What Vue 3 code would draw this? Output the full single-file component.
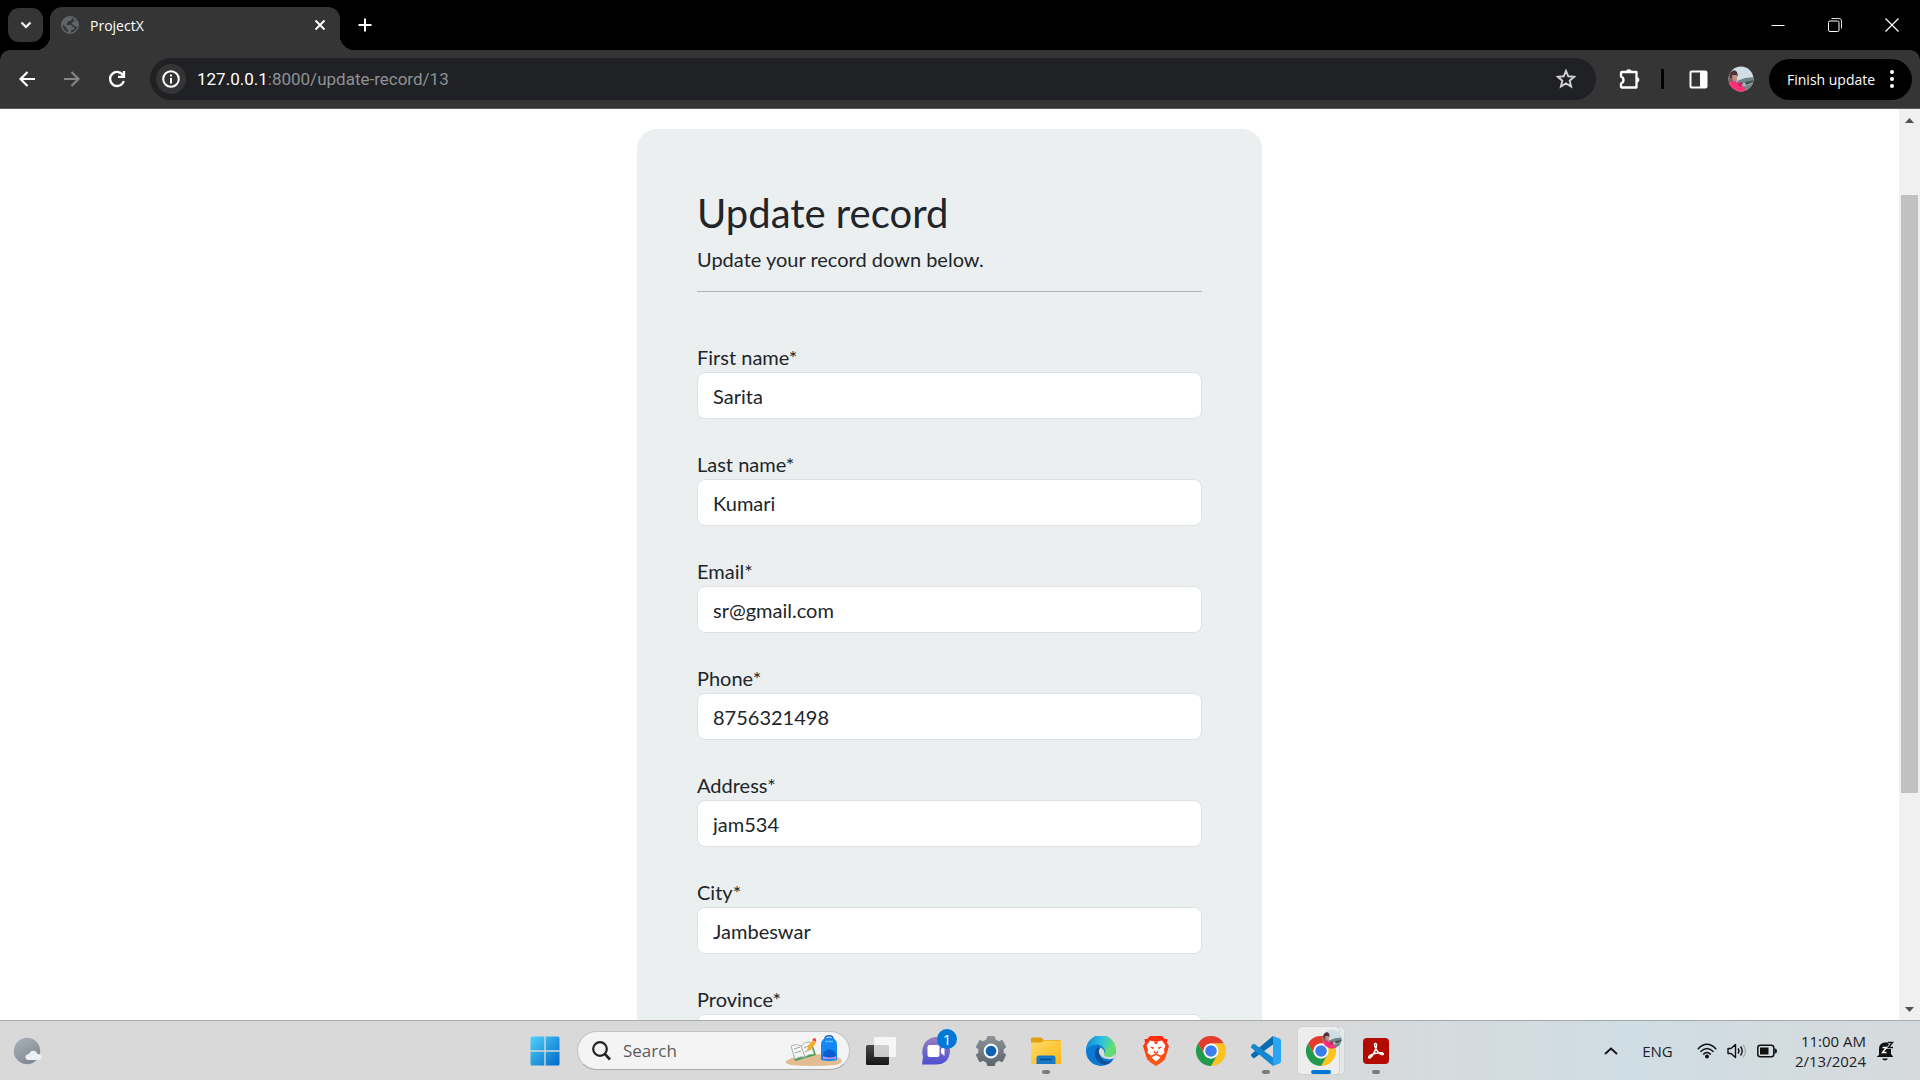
<script setup>
import { ref } from 'vue'

const address = ref('127.0.0.1:8000/update-record/13')
const search = ref('')
const fields = ref([
  { id: 'first_name', label: 'First name*', value: 'Sarita', type: 'text' },
  { id: 'last_name', label: 'Last name*', value: 'Kumari', type: 'text' },
  { id: 'email', label: 'Email*', value: 'sr@gmail.com', type: 'email' },
  { id: 'phone', label: 'Phone*', value: '8756321498', type: 'text' },
  { id: 'address', label: 'Address*', value: 'jam534', type: 'text' },
  { id: 'city', label: 'City*', value: 'Jambeswar', type: 'text' },
  { id: 'province', label: 'Province*', value: '', type: 'text' },
])
</script>

<template>
  <div class="screen">
    <svg class="defs" aria-hidden="true">
      <defs>
        <linearGradient id="win" x1="0" y1="0" x2="1" y2="1"><stop offset="0" stop-color="#4fd2fb" /><stop offset="1" stop-color="#0067c8" /></linearGradient>
        <linearGradient id="chat" x1="0" y1="0" x2="0" y2="1"><stop offset="0" stop-color="#9a7fc0" /><stop offset="1" stop-color="#4c50cf" /></linearGradient>
        <linearGradient id="gear" x1="0" y1="0" x2="0" y2="1"><stop offset="0" stop-color="#8b9299" /><stop offset="1" stop-color="#5d666f" /></linearGradient>
        <linearGradient id="folder" x1="0" y1="0" x2="1" y2="1"><stop offset="0" stop-color="#ffdb6b" /><stop offset="1" stop-color="#fbb813" /></linearGradient>
        <linearGradient id="edgeTop" x1="0" y1="0.3" x2="1" y2="0.5"><stop offset="0" stop-color="#1289d8" /><stop offset="0.5" stop-color="#2fc1de" /><stop offset="1" stop-color="#6be85a" /></linearGradient>
        <linearGradient id="moon" x1="0.2" y1="0" x2="0.8" y2="1"><stop offset="0" stop-color="#a7aeb6" /><stop offset="1" stop-color="#7d8791" /></linearGradient>
        <linearGradient id="brave" x1="0" y1="0" x2="0" y2="1"><stop offset="0" stop-color="#ff2a10" /><stop offset="1" stop-color="#ff5a12" /></linearGradient>
        <linearGradient id="dark" x1="0" y1="0" x2="0" y2="1"><stop offset="0" stop-color="#484848" /><stop offset="1" stop-color="#161616" /></linearGradient>
        <clipPath id="face"><circle cx="13" cy="13" r="12.5" /></clipPath>
        <symbol id="chrome" viewBox="-15 -15 30 30">
          <path fill="#e33b2e" d="M13-7.5A15 15 0 0 0-13-7.5L-6.5 3.75A7.5 7.5 0 0 1 0-7.5Z" />
          <path fill="#fcc31e" d="M0 15A15 15 0 0 0 13-7.5L0-7.5A7.5 7.5 0 0 1 6.5 3.75Z" />
          <path fill="#219a4c" d="M-13-7.5A15 15 0 0 0 0 15L6.5 3.75A7.5 7.5 0 0 1-6.5 3.75Z" />
          <circle r="7.4" fill="#fff" /><circle r="5.8" fill="#3b7ded" />
        </symbol>
        <symbol id="avatar" viewBox="0 0 26 26">
          <g clip-path="url(#face)">
            <path fill="#cfdde5" d="M0 0h26v26H0z" />
            <path fill="#6f8587" d="M9 15l8-3 9-1v15H9z" />
            <path fill="#a9b7a8" d="M12 18l14-4v3l-12 4z" />
            <path fill="#3c5254" d="M17 16l9-2v2l-8 3z" />
            <path fill="#84635c" d="M0 6h8v11H0z" />
            <path fill="#4a3238" d="M2 7q4-5 7-1l1 4-8 2z" />
            <path fill="#c08d80" d="M4 9h5v6H5z" />
            <path fill="#ff2f79" d="M1 16l5-1 4 2 4 2 5 7H4z" />
            <path fill="#b9235c" d="M8 15l3 3 2-2 2 1-3 4z" />
          </g>
        </symbol>
      </defs>
    </svg>

    <header class="browser">
      <div class="tabs">
        <button class="tab-search" aria-label="Search tabs">
          <svg width="12" height="8" viewBox="0 0 12 8"><path d="M1.5 1.5L6 6L10.5 1.5" fill="none" stroke="#fff" stroke-width="2.2" /></svg>
        </button>
        <div class="tab">
          <svg width="18" height="18" viewBox="0 0 18 18">
            <circle cx="9" cy="9" r="8.200" fill="#353535" stroke="#62666b" stroke-width="1.6" />
            <path fill="#62666b" d="M1 8C1 4 4 1 9 1L11 2Q11 4 9.500 5H7V7H5.500V9H9.500Q11.500 9 11.500 11H12.500Q13.500 12 13 13.500L10.500 14L9.500 17Q8 17 7 16.500V13.500Q5 13 5 11L1 8ZM12 2.500L16 6L17 9L16 10.500H14Q12.500 10 12.500 8.500H11Q10.500 7.500 11 6.500L13 6Z" />
          </svg>
          <span class="tab-title">ProjectX</span>
          <button class="plain" aria-label="Close tab">
            <svg width="12" height="12" viewBox="0 0 12 12"><path d="M1.5 1.5L10.5 10.5M10.5 1.5L1.5 10.5" stroke="#fff" stroke-width="1.9" /></svg>
          </button>
        </div>
        <button class="plain new-tab" aria-label="New tab">
          <svg width="14" height="14" viewBox="0 0 14 14"><path d="M7 .5V13.5M.5 7H13.5" stroke="#fff" stroke-width="2" /></svg>
        </button>
        <div class="window-buttons">
          <button class="plain" aria-label="Minimize"><svg width="14" height="14" viewBox="0 0 14 14"><path d="M.5 7.5H13.5" stroke="#fff" /></svg></button>
          <button class="plain" aria-label="Restore"><svg width="14" height="14" viewBox="0 0 14 14"><path d="M3.5 .5H11Q13.5 .5 13.5 3V10.5" fill="none" stroke="#ddd" /><rect x=".5" y="3" width="10.5" height="10.5" rx="1.5" fill="none" stroke="#fff" /></svg></button>
          <button class="plain" aria-label="Close"><svg width="14" height="14" viewBox="0 0 14 14"><path d="M.5 .5L13.5 13.5M13.5 .5L.5 13.5" stroke="#fff" stroke-width="1.2" /></svg></button>
        </div>
      </div>

      <div class="toolbar">
        <nav class="nav">
          <button class="plain" aria-label="Back"><svg width="16" height="16" viewBox="0 0 16 16"><path d="M16 8H2M8.5 1L1.5 8L8.5 15" fill="none" stroke="#fff" stroke-width="2.2" /></svg></button>
          <button class="plain" aria-label="Forward"><svg width="16" height="16" viewBox="0 0 16 16"><path d="M0 8H14M7.5 1L14.5 8L7.5 15" fill="none" stroke="#858585" stroke-width="2.2" /></svg></button>
          <button class="plain" aria-label="Reload"><svg width="18" height="18" viewBox="0 0 18 18"><path d="M15.2 5.5A7 7 0 1 0 15.8 11M16 1V6.8H10" fill="none" stroke="#fff" stroke-width="2.3" /></svg></button>
        </nav>
        <div class="omnibox">
          <button class="info" aria-label="Site information">
            <svg width="18" height="18" viewBox="0 0 18 18"><circle cx="9" cy="9" r="7.8" fill="none" stroke="#fff" stroke-width="2" /><path d="M9 8V13.5M9 4.5V6.5" stroke="#fff" stroke-width="2" /></svg>
          </button>
          <label class="address">
            <span class="address-text"><b>127.0.0.1</b>:8000/update-record/13</span>
            <input v-model="address" class="address-input" aria-label="Address bar" />
          </label>
          <button class="plain" aria-label="Bookmark this page">
            <svg width="20" height="20" viewBox="0 0 20 20"><path d="M10 1.8L12.3 7.3L18.2 7.8L13.7 11.7L15.1 17.5L10 14.4L4.9 17.5L6.3 11.7L1.8 7.8L7.7 7.3Z" fill="none" stroke="#d0d0d0" stroke-width="1.9" /></svg>
          </button>
        </div>
        <div class="tools">
          <button class="plain" aria-label="Extensions">
            <svg width="22" height="22" viewBox="0 0 22 22"><path d="M3 4H17.5V19.5H3Q2 19.5 2 18.5V15.5Q4.500 14.500 4.500 12Q4.500 9.500 2 8.500V5Q2 4 3 4Z" fill="none" stroke="#fff" stroke-width="2.3" stroke-linejoin="round" /><path d="M7 4a2.800 2.800 0 0 1 5.600 0zM17.5 9a2.800 2.800 0 0 1 0 5.600z" fill="#fff" /></svg>
          </button>
          <span class="divider"></span>
          <button class="plain" aria-label="Side panel">
            <svg width="19" height="19" viewBox="0 0 19 19"><rect x="1.5" y="1.5" width="16" height="16" rx="1" fill="none" stroke="#fff" stroke-width="2" /><path d="M11 1h7v17h-7z" fill="#fff" /></svg>
          </button>
          <button class="plain" aria-label="Profile"><svg width="26" height="26"><use href="#avatar" /></svg></button>
        </div>
        <button class="finish">
          Finish update
          <svg width="4" height="18" viewBox="0 0 4 18"><g fill="#fff"><circle cx="2" cy="2" r="2" /><circle cx="2" cy="9" r="2" /><circle cx="2" cy="16" r="2" /></g></svg>
        </button>
      </div>
    </header>

    <div class="viewport">
      <main class="page">
        <form class="card" @submit.prevent>
          <h1>Update record</h1>
          <p>Update your record down below.</p>
          <hr />
          <div v-for="f in fields" :key="f.id" class="field">
            <label :for="f.id">{{ f.label }}</label>
            <input :id="f.id" v-model="f.value" :type="f.type" />
          </div>
        </form>
      </main>
      <div class="scrollbar" aria-hidden="true">
        <svg width="21" height="21" viewBox="0 0 21 21"><path d="M6 14L10.5 9L15 14Z" fill="#505050" /></svg>
        <div class="track-before"></div>
        <div class="thumb"></div>
        <div class="track-after"></div>
        <svg width="21" height="21" viewBox="0 0 21 21"><path d="M6 8L10.5 13L15 8Z" fill="#505050" /></svg>
      </div>
    </div>

    <footer class="taskbar">
      <div class="side">
        <button class="plain" aria-label="Weather">
          <svg width="30" height="28" viewBox="0 0 30 28"><circle cx="14" cy="14" r="13.2" fill="url(#moon)" /><path d="M15 23Q12 22 12.5 19.5Q13 17 16 17Q18 12.5 22 14Q24 15 24.5 17Q29 17 28.5 20.5Q28 23 25 23Z" fill="#edf1f5" /></svg>
        </button>
      </div>
      <div class="apps">
        <button class="app" aria-label="Start">
          <svg width="30" height="30" viewBox="0 0 30 30"><path fill="url(#win)" d="M2 .5H14.3V14.3H.5V2Q.5 .5 2 .5ZM15.7 .5H28Q29.5 .5 29.5 2V14.3H15.7ZM.5 15.7H14.3V29.5H2Q.5 29.5 .5 28ZM15.7 15.7H29.5V28Q29.5 29.5 28 29.5H15.7Z" /></svg>
        </button>
        <label class="search">
          <svg width="19" height="20" viewBox="0 0 19 20"><circle cx="8" cy="8" r="6.8" fill="none" stroke="#222" stroke-width="2.2" /><path d="M12.8 12.8L18 18.5" stroke="#222" stroke-width="2.6" /></svg>
          <input v-model="search" type="text" placeholder="Search" aria-label="Search" />
          <svg width="58" height="32" viewBox="0 0 58 32">
            <path d="M1 26Q10 20 26 19.500Q48 18 56 24Q59 27 51 30Q26 32 6 30Q-1 28 1 26Z" fill="#e3bd92" />
            <path d="M7 14L10 26L31 20L28 11Z" fill="#3f9c55" />
            <path d="M6 11Q12 8 16 11Q20 6 25 7L29 19Q23 19 20 22Q15 21 10 24Z" fill="#f6f6f0" stroke="#a9b7b5" />
            <path d="M16 11L20 22M9 14l6-2M10 18l6-2M19 13l6-3M20 17l6-3" stroke="#9ba7ad" fill="none" />
            <path d="M22 16L23 11L28 5L31 8L26 14Z" fill="#f8ab25" /><path d="M27 5L29 3Q32 3 31 7Z" fill="#ed4858" />
            <path d="M40 4Q40 .8 44 .8Q48 .8 48 4" fill="none" stroke="#1469cc" stroke-width="1.6" />
            <path d="M36 25V10Q36 2.5 44 2.5Q52 2.5 52 10V25Q44 27 36 25Z" fill="#1687f2" />
            <path d="M38 24V20Q39 14.500 44 14.500Q50 14.500 51 20V24Z" fill="#0a5bcf" /><path d="M38 21Q45 24 51 21V24H38Z" fill="#b58cf2" />
            <path d="M40 6.5H48" stroke="#51c3ff" stroke-width="1.5" />
          </svg>
        </label>
        <button class="app" aria-label="Task view">
          <svg width="30" height="30" viewBox="0 0 30 30"><rect x="0" y="9" width="23" height="20" rx="1.5" fill="url(#dark)" /><rect x="8" y="1" width="22" height="20" rx="1" fill="#fff" fill-opacity=".75" /></svg>
        </button>
        <button class="app" aria-label="Chat">
          <svg width="30" height="30" viewBox="0 0 30 30"><path d="M1 28.5L2 21Q0 14 3.5 7.5Q8 1 15 1Q28 2 29 15Q28 28.5 15 28.5Z" fill="url(#chat)" /><rect x="6.5" y="9" width="12" height="12" rx="2" fill="#fff" /><path d="M20 13L23.5 10V20L20 17Z" fill="#fff" /></svg>
          <span class="badge">1</span>
        </button>
        <button class="app" aria-label="Settings">
          <svg width="30" height="30" viewBox="-15 -15 30 30">
            <path fill="url(#gear)" d="M-4-10.5L-3-14H3L4-10.5Q6-10 7.5-8.5L11-10L14-4L11.5-2Q12 0 11.5 2L14 4L11 10L7.5 8.5Q6 10 4 10.5L3 14H-3L-4 10.5Q-6 10-7.5 8.5L-11 10L-14 4L-11.5 2Q-12 0-11.5-2L-14-4L-11-10L-7.5-8.5Q-6-10-4-10.5Z" stroke="url(#gear)" stroke-width="2" stroke-linejoin="round" />
            <circle r="7.4" fill="#f4f5f6" /><circle r="5.3" fill="#0e61b3" />
          </svg>
        </button>
        <button class="app" aria-label="File Explorer">
          <svg width="30" height="30" viewBox="0 0 30 30"><path d="M0 8V3Q0 1.5 1.5 1.5H10L13 4H28.5Q30 4 30 6V9Z" fill="#e0a010" /><path d="M0 7.5Q0 6.5 1 6.5H10L13 4.5H29Q30 4.5 30 5.5V28H0Z" fill="url(#folder)" /><path d="M5.5 28V22Q5.5 19.5 8 19.5H22Q24.5 19.5 24.5 22V28Z" fill="#1779c8" /><path d="M10 23.5H20" stroke="#0c4c8c" stroke-width="1.6" stroke-linecap="round" /></svg>
          <span class="mark"></span>
        </button>
        <button class="app" aria-label="Edge">
          <svg width="30" height="30" viewBox="0 0 30 30"><circle cx="15" cy="15" r="15" fill="#0d78d2" /><path d="M0 14A15 15 0 0 1 30 14Q30 20 23 20.5Q18 20.5 18.5 17.5Q20 15 18 12.5Q14 7 8 9Q3 10 0 14Z" fill="url(#edgeTop)" /><path d="M10 13Q7 22 14 27Q20 31 26.5 25Q18 27 14.5 21Q13 17 16 13Q12 10 10 13Z" fill="#10509a" /><path d="M14.5 11.5Q19 13.5 18.3 17.5Q18 20.5 24 20.5Q28 20 30 16.5Q29.5 21 28 22.500Q20 24.500 15 20.500Q11 15 14.5 11.5Z" fill="#d8dadb" /><path d="M18.3 17.5Q17 21 23 21Q28.5 21 30 14L28 12L20 12Q20 16 18.3 17.5Z" fill="#63dc78" /></svg>
        </button>
        <button class="app" aria-label="Brave">
          <svg width="26" height="30" viewBox="0 0 26 30">
            <path d="M7 0H19L22 3L24.5 3L24 7L26 10L22 23Q20 26 13 30Q6 26 4 23L0 10L2 7L1.5 3L4 3Z" fill="url(#brave)" />
            <path d="M7 4.500L11 5.500H15L19 4.500L22.500 9.500L21 13.500L21.500 17L18 19.500L13 17.500L8 19.500L4.500 17L5 13.500L3.500 9.500Z" fill="#fff" />
            <path d="M13 19L17.500 21.500L13 25.500L8.500 21.500Z" fill="#fff" />
            <path d="M6.500 10.500L11 11.200L10.200 13.500ZM19.500 10.500L15 11.200L15.800 13.500ZM11 5.500L12 8H14L15 5.500ZM11.500 14L10.500 16.500L13 18L15.500 16.500L14.500 14L14 16L13 16.500L12 16Z" fill="#ff4717" />
          </svg>
        </button>
        <button class="app" aria-label="Chrome"><svg width="30" height="30"><use href="#chrome" /></svg></button>
        <button class="app" aria-label="Visual Studio Code">
          <svg width="30" height="30" viewBox="0 0 30 30"><path d="M22 0V8.500L3.500 22Q2.500 22.500 1.500 21.500L.3 20Q-.5 19 .5 18Z" fill="#0a6cb0" /><path d="M22 30V21.500L3.500 8Q2.500 7.500 1.500 8.500L.3 10Q-.5 11 .5 12Z" fill="#1389d1" /><path d="M22 0L28 2.300Q30 3 30 5V25Q30 27 28 27.700L22 30Z" fill="#2ba5f2" /></svg>
          <span class="mark"></span>
        </button>
        <button class="app active" aria-label="Chrome, ProjectX">
          <svg width="30" height="30"><use href="#chrome" /></svg>
          <svg class="mini" width="20" height="20"><use href="#avatar" /></svg>
          <span class="mark wide"></span>
        </button>
        <button class="app" aria-label="Acrobat">
          <svg width="26" height="26" viewBox="0 0 26 26"><rect width="26" height="26" rx="4" fill="#b30b00" /><path d="M12 5.500Q14.200 5 13.300 9Q12 14 9 18Q7 20.500 5.800 19.800Q5 18.500 8 17Q13 14.500 18.500 14.800Q21 15.300 20.200 16.500Q18.500 17.500 15.500 14.500Q12.500 11 11.500 7.500Q11.200 5.800 12 5.500Z" fill="none" stroke="#fff" stroke-width="1.4" /></svg>
          <span class="mark"></span>
        </button>
      </div>
      <div class="side tray">
        <button class="plain" aria-label="Show hidden icons"><svg width="14" height="8" viewBox="0 0 14 8"><path d="M1 7L7 1.5L13 7" fill="none" stroke="#111" stroke-width="1.8" /></svg></button>
        <button class="plain lang">ENG</button>
        <button class="plain status" aria-label="Network, volume and battery">
          <svg width="20" height="16" viewBox="0 0 20 16"><g fill="none" stroke="#111" stroke-width="1.5"><path d="M.8 6.2Q10-3.500 19.2 6.2M3.5 8.8Q10 2 16.5 8.8M6.2 11.5Q10 7.500 13.8 11.5" /></g><circle cx="10" cy="13.5" r="2" fill="#111" /></svg>
          <svg width="20" height="16" viewBox="0 0 20 16"><path d="M1 5.5H4L8.5 1.5V14.5L4 10.5H1Z M11 5.5Q13 8 11 10.5M13.5 3.5Q17 8 13.5 12.5" fill="none" stroke="#111" stroke-width="1.4" stroke-linejoin="round" /><path d="M16 1.5Q21 8 16 14.5" fill="none" stroke="#a8afb2" stroke-width="1.4" /></svg>
          <svg width="20" height="14" viewBox="0 0 20 14"><rect x=".8" y="1.3" width="16" height="11.4" rx="2.5" fill="none" stroke="#111" stroke-width="1.5" /><rect x="3" y="3.5" width="8.5" height="7" fill="#111" /><path d="M17.5 4.5H18.5Q20 5 20 7Q20 9 18.5 9.5H17.5Z" fill="#111" /></svg>
        </button>
        <button class="plain clock"><span>11:00 AM</span><span>2/13/2024</span></button>
        <button class="plain" aria-label="Notifications">
          <svg width="17" height="20" viewBox="0 0 17 20"><path d="M2 14V8Q2 2 8 1.5H11L14 8V13L16 15.5V16H0V15.5ZM5 17.5H11Q10 19.5 8 19.5Q6 19.5 5 17.5Z" fill="#111" /><path d="M5.5 6.5H9.5L5.5 11.5H9.5" fill="none" stroke="#fff" stroke-width="1.4" /><path d="M11 1.5H15.5L11.5 6.5H16" fill="none" stroke="#d4dbde" stroke-width="3" /><path d="M11 1.5H15.5L11.5 6.5H16" fill="none" stroke="#111" stroke-width="1.4" /></svg>
        </button>
      </div>
    </footer>
  </div>
</template>

<style>
body {
  margin: 0;
  overflow: hidden;
}
</style>

<style scoped>
* {
  box-sizing: border-box;
}
svg {
  display: block;
  flex: none;
}
button,
input {
  font: inherit;
  color: inherit;
}
.defs {
  position: absolute;
  width: 0;
  height: 0;
}
.screen {
  display: flex;
  flex-direction: column;
  height: 100vh;
  background: #fff;
  font-family: "Open Sans", "Noto Sans", sans-serif;
}
.browser {
  flex: none;
  background: #000;
  color: #fff;
}
.plain {
  display: flex;
  align-items: center;
  justify-content: center;
  padding: 0;
  border: 0;
  background: none;
}

/* tab strip */
.tabs {
  display: flex;
  align-items: center;
  height: 50px;
  padding-left: 8px;
}
.tab-search {
  display: flex;
  align-items: center;
  justify-content: center;
  width: 35px;
  height: 34px;
  padding: 0;
  border: 0;
  border-radius: 11px;
  background: #353535;
}
.tab {
  position: relative;
  display: flex;
  align-items: center;
  gap: 11px;
  align-self: flex-end;
  width: 290px;
  height: 43px;
  margin-left: 7px;
  padding: 0 14px 7px 11px;
  border-radius: 12px 12px 0 0;
  background: #353535;
  font-size: 14px;
}
.tab::before,
.tab::after {
  content: "";
  position: absolute;
  bottom: 0;
  width: 14px;
  height: 14px;
}
.tab::before {
  left: -14px;
  background: radial-gradient(circle at 0 0, transparent 14px, #353535 14px);
}
.tab::after {
  right: -14px;
  background: radial-gradient(circle at 100% 0, transparent 14px, #353535 14px);
}
.tab-title {
  flex: 1;
}
.new-tab {
  width: 50px;
  height: 40px;
}
.window-buttons {
  display: flex;
  height: 50px;
  margin-left: auto;
}
.window-buttons .plain {
  width: 57px;
}

/* toolbar */
.toolbar {
  display: flex;
  align-items: center;
  height: 59px;
  padding-right: 8px;
  border-bottom: 1px solid #5a5a5a;
  border-radius: 10px 10px 0 0;
  background: #353535;
}
.nav {
  display: flex;
  width: 150px;
  padding-left: 4px;
}
.nav .plain {
  width: 45px;
  height: 40px;
}
.omnibox {
  display: flex;
  flex: 1;
  align-items: center;
  gap: 11px;
  height: 42px;
  padding: 0 20px 0 6px;
  border-radius: 21px;
  background: #202124;
}
.info {
  display: flex;
  align-items: center;
  justify-content: center;
  width: 30px;
  height: 30px;
  padding: 0;
  border: 0;
  border-radius: 15px;
  background: #353535;
}
.address {
  position: relative;
  display: flex;
  flex: 1;
  align-items: center;
  font-family: Roboto, "Open Sans", sans-serif;
  font-size: 17px;
  line-height: 24px;
}
.address-text {
  color: #8f9194;
}
.address-text b {
  color: #fff;
  font-weight: 400;
}
.address-input {
  position: absolute;
  inset: 0;
  width: 100%;
  padding: 0;
  border: 0;
  background: transparent;
  color: transparent;
  outline: 0;
}
.tools {
  display: flex;
  align-items: center;
  width: 173px;
  padding: 0 15px 0 23px;
  justify-content: space-between;
}
.divider {
  width: 3px;
  height: 20px;
  margin-right: 4px;
  background: #000;
}
.finish {
  display: flex;
  align-items: center;
  justify-content: space-between;
  width: 143px;
  height: 41px;
  padding: 0 18px;
  border: 0;
  border-radius: 21px;
  background: #000;
  font-size: 14px;
  white-space: nowrap;
}

/* page */
.viewport {
  display: flex;
  flex: 1;
  min-height: 0;
}
.page {
  flex: 1;
  overflow: hidden;
  padding: 20px 0;
  color: #212529;
  font-family: Lato, sans-serif;
  font-size: 20px;
  line-height: 30px;
}
.card {
  width: 625px;
  max-width: 100%;
  margin: 0 auto;
  padding: 60px;
  border-radius: 20px;
  background: #ebeff0;
}
h1 {
  margin: 0 0 7px;
  font-size: 40px;
  font-weight: 400;
  line-height: 48px;
}
p {
  margin: 0;
}
hr {
  margin: 17px 0 50px;
  border: 0;
  border-top: 1px solid #b1b5b7;
}
.field {
  margin-bottom: 30px;
}
.field label {
  display: block;
}
.field input {
  display: block;
  width: 100%;
  height: 47px;
  padding: 0 15px;
  border: 1px solid #dee2e6;
  border-radius: 8px;
  background: #fff;
}
.scrollbar {
  display: flex;
  flex-direction: column;
  width: 21px;
  background: #f0f0f0;
}
.track-before {
  flex: 65;
}
.thumb {
  flex: 598;
  margin: 0 2px;
  background: #c1c1c1;
}
.track-after {
  flex: 206;
}

/* taskbar */
.taskbar {
  display: flex;
  flex: none;
  height: 60px;
  border-top: 1px solid #a9abac;
  background: linear-gradient(90deg, #d9d9d9 0 68%, #cfdde4 85%, #d6dadc 100%);
  color: #222;
}
.side {
  display: flex;
  flex: 1;
  align-items: center;
  padding: 0 26px 0 13px;
}
.apps {
  display: flex;
  align-items: center;
}
.app {
  position: relative;
  display: flex;
  align-items: center;
  justify-content: center;
  width: 55px;
  height: 59px;
  padding: 0;
  border: 0;
  background: none;
}
.search {
  display: flex;
  align-items: center;
  gap: 12px;
  width: 273px;
  height: 39px;
  margin: 0 3px 0 5px;
  padding: 0 6px 0 14px;
  border: 1px solid #c3c3c3;
  border-bottom-color: #a8a8a8;
  border-radius: 20px;
  background: #f4f4f4;
}
.search input {
  flex: 1;
  min-width: 0;
  padding: 0;
  border: 0;
  outline: 0;
  background: none;
  font-size: 17px;
}
.search input::placeholder {
  color: #5c5c5c;
  opacity: 1;
}
.badge {
  position: absolute;
  top: 8px;
  left: 29px;
  width: 20px;
  height: 20px;
  border-radius: 10px;
  background: #0078d7;
  color: #fff;
  font-size: 15px;
  line-height: 20px;
  text-align: center;
}
.mark {
  position: absolute;
  bottom: 6px;
  left: 24px;
  width: 8px;
  height: 4px;
  border-radius: 2px;
  background: #7c7c7c;
}
.mark.wide {
  left: 18px;
  width: 20px;
  background: #0078d7;
}
.active::before,
.active::after {
  content: "";
  position: absolute;
  inset: 5px 3px 5px 4px;
  border: 1px solid #cfd2d3;
  border-radius: 5px;
  background: #e6e8e8;
}
.active::after {
  right: 8px;
  background: #ededed;
}
.active svg,
.active .mark {
  z-index: 1;
}
.active svg {
  position: relative;
}
.active .mini {
  position: absolute;
  top: 8px;
  left: 29px;
}
.tray {
  justify-content: flex-end;
}
.lang {
  width: 79px;
  font-size: 15px;
}
.status {
  gap: 10px;
  margin-right: 11px;
}
.clock {
  flex-direction: column;
  align-items: flex-end;
  width: 78px;
  margin-right: 11px;
  font-size: 15px;
  line-height: 20px;
}
</style>
